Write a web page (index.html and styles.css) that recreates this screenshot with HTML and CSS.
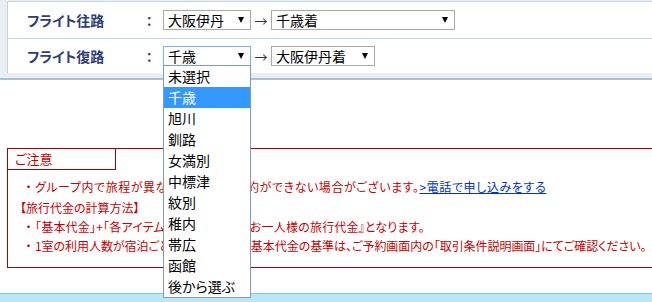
FILE: index.html
```html
<!DOCTYPE html>
<html lang="ja">
<head>
    <meta charset="UTF-8">
    <meta name="viewport" content="width=device-width, initial-scale=1.0">
    <title>フライト選択</title>
    <link rel="stylesheet" href="styles.css">
</head>
<body>
    <div class="flight-panel">
        <div class="flight-table">
            <div class="flight-row">
                <span class="label">フライト往路</span>
                <span class="colon">：</span>
                <span class="select dep">大阪伊丹<i class="caret"></i></span>
                <span class="arrow">→</span>
                <span class="select arr-long">千歳着<i class="caret"></i></span>
            </div>
            <div class="flight-row">
                <span class="label">フライト復路</span>
                <span class="colon">：</span>
                <span class="select dep focused">千歳<i class="caret"></i>
                    <ul class="dropdown">
                        <li>未選択</li>
                        <li class="active">千歳</li>
                        <li>旭川</li>
                        <li>釧路</li>
                        <li>女満別</li>
                        <li>中標津</li>
                        <li>紋別</li>
                        <li>稚内</li>
                        <li>帯広</li>
                        <li>函館</li>
                        <li>後から選ぶ</li>
                    </ul>
                </span>
                <span class="arrow">→</span>
                <span class="select arr-short">大阪伊丹着<i class="caret"></i></span>
            </div>
        </div>
    </div>

    <div class="notice">
        <div class="notice-title">ご注意</div>
        <div class="notice-body">
            <p class="first"><span class="dot">・</span>グループ内で旅程が異なる場合は、ご予約ができない場合がございます。<a href="#">&gt;電話で申し込みをする</a></p>
            <p class="head">【旅行代金の計算方法】</p>
            <p class="third"><span class="dot">・</span>「基本代金」+「各アイテム代金」の合計が『お一人様の旅行代金』となります。</p>
            <p class="fourth"><span class="dot">・</span>1室の利用人数が宿泊ごとに異なる場合の基本代金の基準は、ご予約画面内の「取引条件説明画面」にてご確認ください。</p>
        </div>
    </div>

    <div class="footer-band"></div>
</body>
</html>
```

FILE: styles.css
```css
body{
    margin: 0;
    width: 652px;
    height: 302px;
    overflow: hidden;
    background-color: #fff;
    font-family: "Noto Sans CJK JP", "Noto Sans", sans-serif;
    font-feature-settings: "palt";
}

/* flight select panel */
.flight-panel{
    background-color: #e9eef2;
    padding: 1px 0 5px 7px;
    border-bottom: 2px solid #a9c2d3;
}
.flight-table{
    background-color: #fff;
    border-top: 1px solid #c6d5df;
    border-left: 1px solid #c6d5df;
}
.flight-row{
    display: flex;
    align-items: center;
    height: 36px;
    padding-left: 19px;
}
.flight-row + .flight-row{
    height: 34px;
    border-top: 1px solid #c6d5df;
}
.label{
    width: 119px;
    font-size: 14px;
    font-weight: bold;
    color: #2f3d78;
}
.colon{
    width: 17px;
    font-size: 13px;
    font-weight: bold;
    color: #2f3d78;
}
.select{
    position: relative;
    display: flex;
    align-items: center;
    box-sizing: border-box;
    height: 20px;
    padding-left: 4px;
    border: 1px solid #a9a9a9;
    background-color: #fff;
    font-size: 14px;
    line-height: 18px;
    color: #000;
}
.select.focused{
    border-color: #7eb4ea;
}
.dep{ width: 88px; }
.arr-long{ width: 184px; }
.arr-short{ width: 104px; }
.caret{
    margin-left: auto;
    margin-right: 6px;
    width: 0;
    height: 0;
    border-left: 3.5px solid transparent;
    border-right: 3.5px solid transparent;
    border-top: 6px solid #000;
}
.arrow{
    width: 20px;
    text-align: center;
    font-size: 13px;
    color: #333;
}

/* open option list */
.dropdown{
    position: absolute;
    top: 100%;
    left: -1px;
    z-index: 10;
    width: 88px;
    box-sizing: border-box;
    margin: 0;
    padding: 0;
    list-style: none;
    background-color: #fff;
    border: 1px solid #7f9db9;
}
.dropdown li{
    height: 21px;
    padding-left: 4px;
    line-height: 21px;
    font-size: 14px;
    color: #000;
}
.dropdown li.active{
    background-color: #3399ff;
    color: #fff;
}

/* notice box */
.notice{
    width: 660px;
    margin: 68px 0 0 7px;
    border: 1px solid #a80000;
    color: #c80000;
}
.notice-title{
    box-sizing: border-box;
    width: 108px;
    height: 21px;
    padding-left: 7px;
    border-right: 1px solid #a80000;
    border-bottom: 1px solid #a80000;
    font-size: 13px;
    line-height: 20px;
}
.notice-body{
    padding: 7px 0 12px 14px;
    font-size: 12px;
    line-height: 19px;
}
.notice-body p{
    margin: 0;
    white-space: nowrap;
}
.notice-body .dot{
    display: inline-block;
    width: 13px;
    text-align: center;
    font-feature-settings: normal;
    letter-spacing: 0;
}
.notice-body p.first{
    margin-bottom: 2px;
    letter-spacing: 0.55px;
}
.notice-body p.head{
    margin-left: -2px;
}
.notice-body p.third{
    letter-spacing: 0.2px;
}
.notice-body p.fourth{
    letter-spacing: -0.05px;
}
.notice-body a{
    color: #0033cc;
    letter-spacing: 0.6px;
}

.footer-band{
    margin-top: 25px;
    height: 20px;
    border-top: 1px solid #8cc3dc;
    background-color: #b9e6fb;
}
```
